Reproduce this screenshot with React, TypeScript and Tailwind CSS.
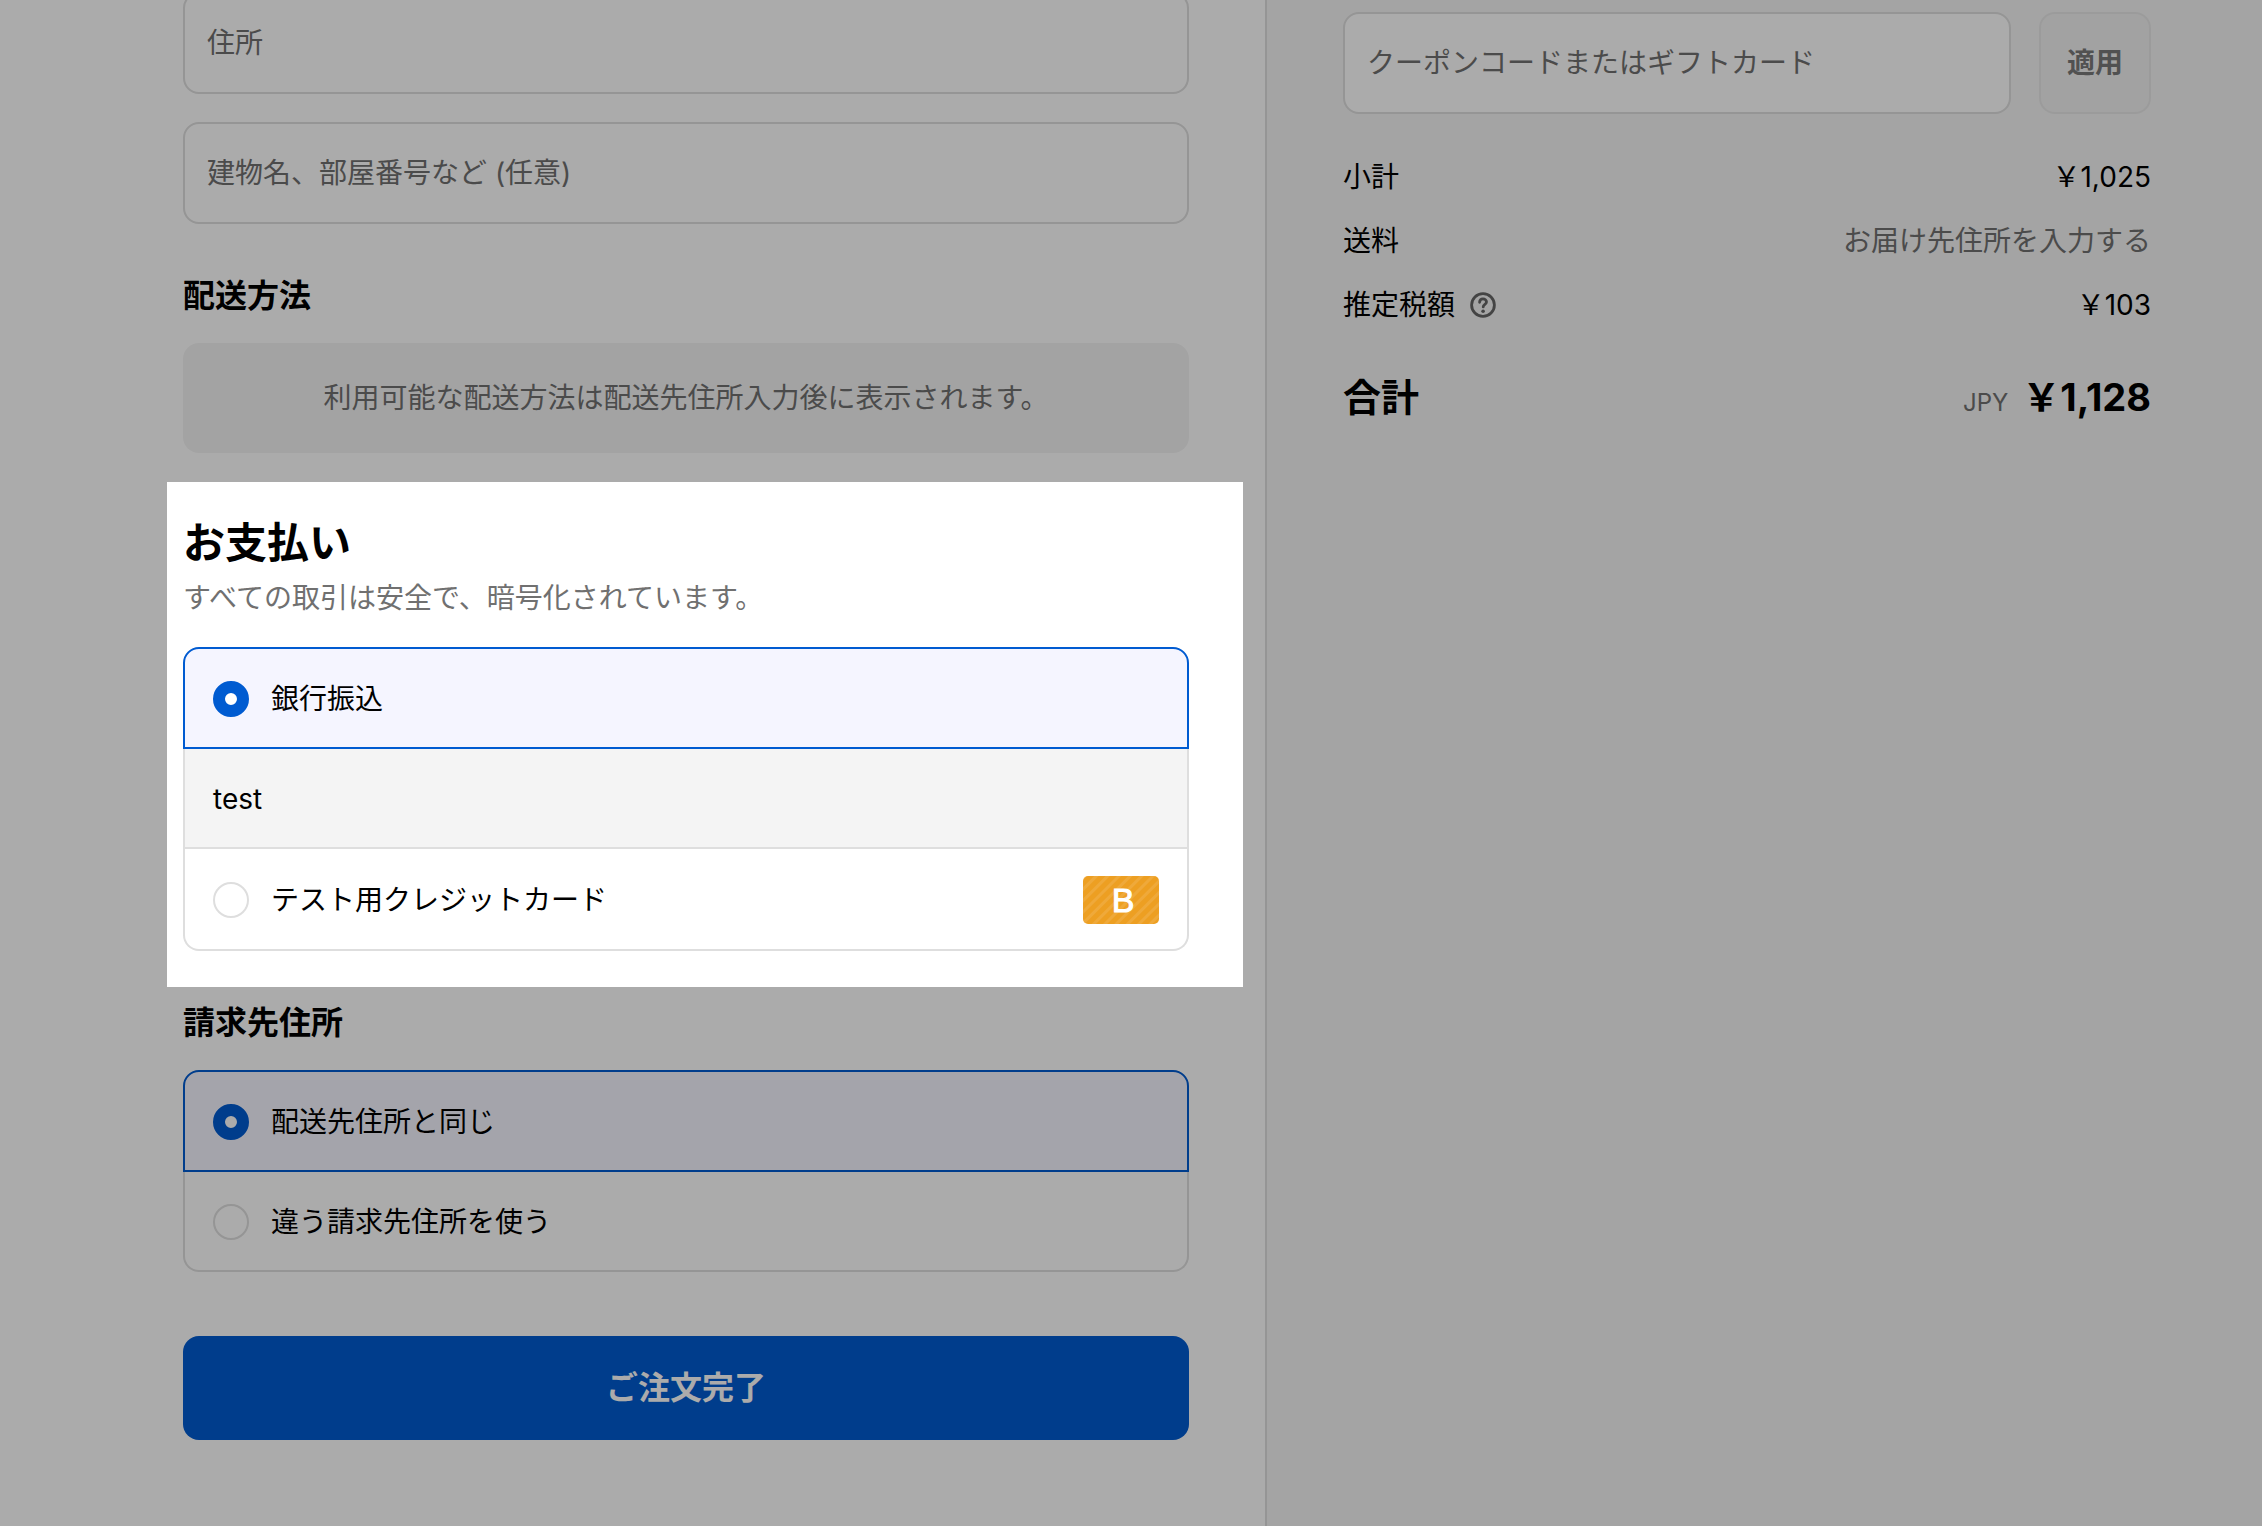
import type { ReactNode } from "react";

function Field({ label }: { label: string }) {
  return (
    <input
      type="text"
      aria-label={label}
      placeholder={label}
      className="block h-[102px] w-full min-w-0 rounded-2xl border-2 border-[#dedede] bg-white px-[22px] text-[28px] leading-[42px] text-black placeholder:text-[#707070]"
    />
  );
}

function Option({
  name,
  label,
  checked = false,
  last = false,
  children,
}: {
  name: string;
  label: string;
  checked?: boolean;
  last?: boolean;
  children?: ReactNode;
}) {
  const tone = checked
    ? "rounded-t-2xl border-2 border-[#005bd1] bg-[#f5f5ff]"
    : "border-x-2 border-b-2 border-[#dedede] bg-white";
  return (
    <label
      className={`flex items-center gap-[22px] px-7 pt-[29px] pb-[27px] ${tone} ${last ? "rounded-b-2xl" : ""}`}
    >
      <input
        type="radio"
        name={name}
        defaultChecked={checked}
        className="size-9 shrink-0 appearance-none rounded-full border-2 border-[#dedede] bg-white checked:border-12 checked:border-[#005bd1]"
      />
      <span className="flex-1 text-[28px] leading-[42px]">{label}</span>
      {children}
    </label>
  );
}

function BogusBadge() {
  return (
    <svg viewBox="0 0 76 48" className="-my-0.5 h-12 w-[76px] shrink-0" role="img" aria-label="Bogus">
      <defs>
        <pattern id="stripes" width="8" height="8" patternUnits="userSpaceOnUse" patternTransform="rotate(45)">
          <rect width="8" height="8" fill="#ed9f22" />
          <rect width="3" height="8" fill="#efa93a" />
        </pattern>
      </defs>
      <rect width="76" height="48" rx="5" fill="url(#stripes)" />
      <text
        x="40"
        y="36"
        textAnchor="middle"
        fill="#fff"
        stroke="#fff"
        strokeWidth="1"
        className="font-['Liberation_Sans'] text-[34px]"
      >
        B
      </text>
    </svg>
  );
}

function Row({ label, children }: { label: ReactNode; children: ReactNode }) {
  return (
    <div className="flex items-center justify-between">
      <dt className="flex items-center gap-[15px]">{label}</dt>
      <dd>{children}</dd>
    </div>
  );
}

function Heading({ children }: { children: ReactNode }) {
  return <h2 className="text-[32px] leading-[48px] font-bold">{children}</h2>;
}

export default function App() {
  return (
    <div
      lang="ja"
      className="grid min-h-screen grid-cols-[minmax(0,1267fr)_minmax(0,995fr)] overflow-hidden bg-white font-[Inter,'Noto_Sans_CJK_JP',sans-serif] text-[28px] leading-[42px] text-black"
    >
      <main className="border-r-2 border-[#dedede] pr-[76px] pl-8">
        <form className="-mt-2 ml-auto w-full max-w-[1006px] pb-16" onSubmit={(e) => e.preventDefault()}>
          <div className="flex flex-col gap-7">
            <Field label="住所" />
            <Field label="建物名、部屋番号など (任意)" />
          </div>

          <section className="mt-12">
            <Heading>配送方法</Heading>
            <p className="mt-[23px] rounded-2xl bg-[#f4f4f4] py-[34px] text-center text-[#707070]">
              利用可能な配送方法は配送先住所入力後に表示されます。
            </p>
          </section>

          {/* Spotlight: the spread shadow dims everything outside this section */}
          <section className="relative z-10 mt-[29px] -mr-[54px] -ml-4 bg-white pt-[33px] pr-[54px] pb-9 pl-4 shadow-[0_0_0_3000px_rgba(0,0,0,0.33)]">
            <h2 className="text-[42px] leading-[56px] font-bold">お支払い</h2>
            <p className="mt-1.5 text-[#707070]">すべての取引は安全で、暗号化されています。</p>
            <div className="mt-7">
              <Option name="payment" label="銀行振込" checked />
              <div className="border-x-2 border-b-2 border-[#dedede] bg-[#f4f4f4] px-7 pt-[29px] pb-[27px]">test</div>
              <Option name="payment" label="テスト用クレジットカード" last>
                <BogusBadge />
              </Option>
            </div>
          </section>

          <section className="mt-3">
            <Heading>請求先住所</Heading>
            <div className="mt-[23px]">
              <Option name="billing" label="配送先住所と同じ" checked />
              <Option name="billing" label="違う請求先住所を使う" last />
            </div>
          </section>

          <button
            type="submit"
            className="mt-16 w-full rounded-2xl bg-[#005bd1] py-7 text-[32px] leading-[48px] font-bold text-white"
          >
            ご注文完了
          </button>
        </form>
      </main>

      <aside className="bg-[#f5f5f5] px-[76px] pt-3">
        <div className="max-w-[808px]">
          <form className="flex gap-7" onSubmit={(e) => e.preventDefault()}>
            <Field label="クーポンコードまたはギフトカード" />
            <button
              type="submit"
              disabled
              className="shrink-0 rounded-2xl border-2 border-[#e8e8e8] bg-[#f2f2f2] px-[26px] font-bold text-[#7a7a7a]"
            >
              適用
            </button>
          </form>

          <dl className="mt-[42px] flex flex-col gap-[22px]">
            <Row label="小計">￥1,025</Row>
            <Row label="送料">
              <span className="text-[#707070]">お届け先住所を入力する</span>
            </Row>
            <Row
              label={
                <>
                  推定税額
                  <button type="button" aria-label="税額について" className="text-[#666666]">
                    <svg viewBox="0 0 26 26" className="size-[26px]" fill="none" stroke="currentColor">
                      <circle cx="13" cy="13" r="11.4" strokeWidth="2.8" />
                      <path
                        d="M9.6 10.3C9.7 8 11.1 6.9 13 6.9s3.5 1.2 3.5 3c0 2.5-3.3 2.4-3.3 5"
                        strokeWidth="2.8"
                        strokeLinecap="round"
                      />
                      <circle cx="13.1" cy="19.2" r="1.8" fill="currentColor" stroke="none" />
                    </svg>
                  </button>
                </>
              }
            >
              ￥103
            </Row>
          </dl>

          <dl className="mt-[43px] flex items-baseline justify-between text-[38px] leading-[56px] font-bold">
            <dt>合計</dt>
            <dd className="flex items-baseline gap-[14px]">
              <span className="text-2xl font-normal text-[#707070]">JPY</span>
              ￥1,128
            </dd>
          </dl>
        </div>
      </aside>
    </div>
  );
}
